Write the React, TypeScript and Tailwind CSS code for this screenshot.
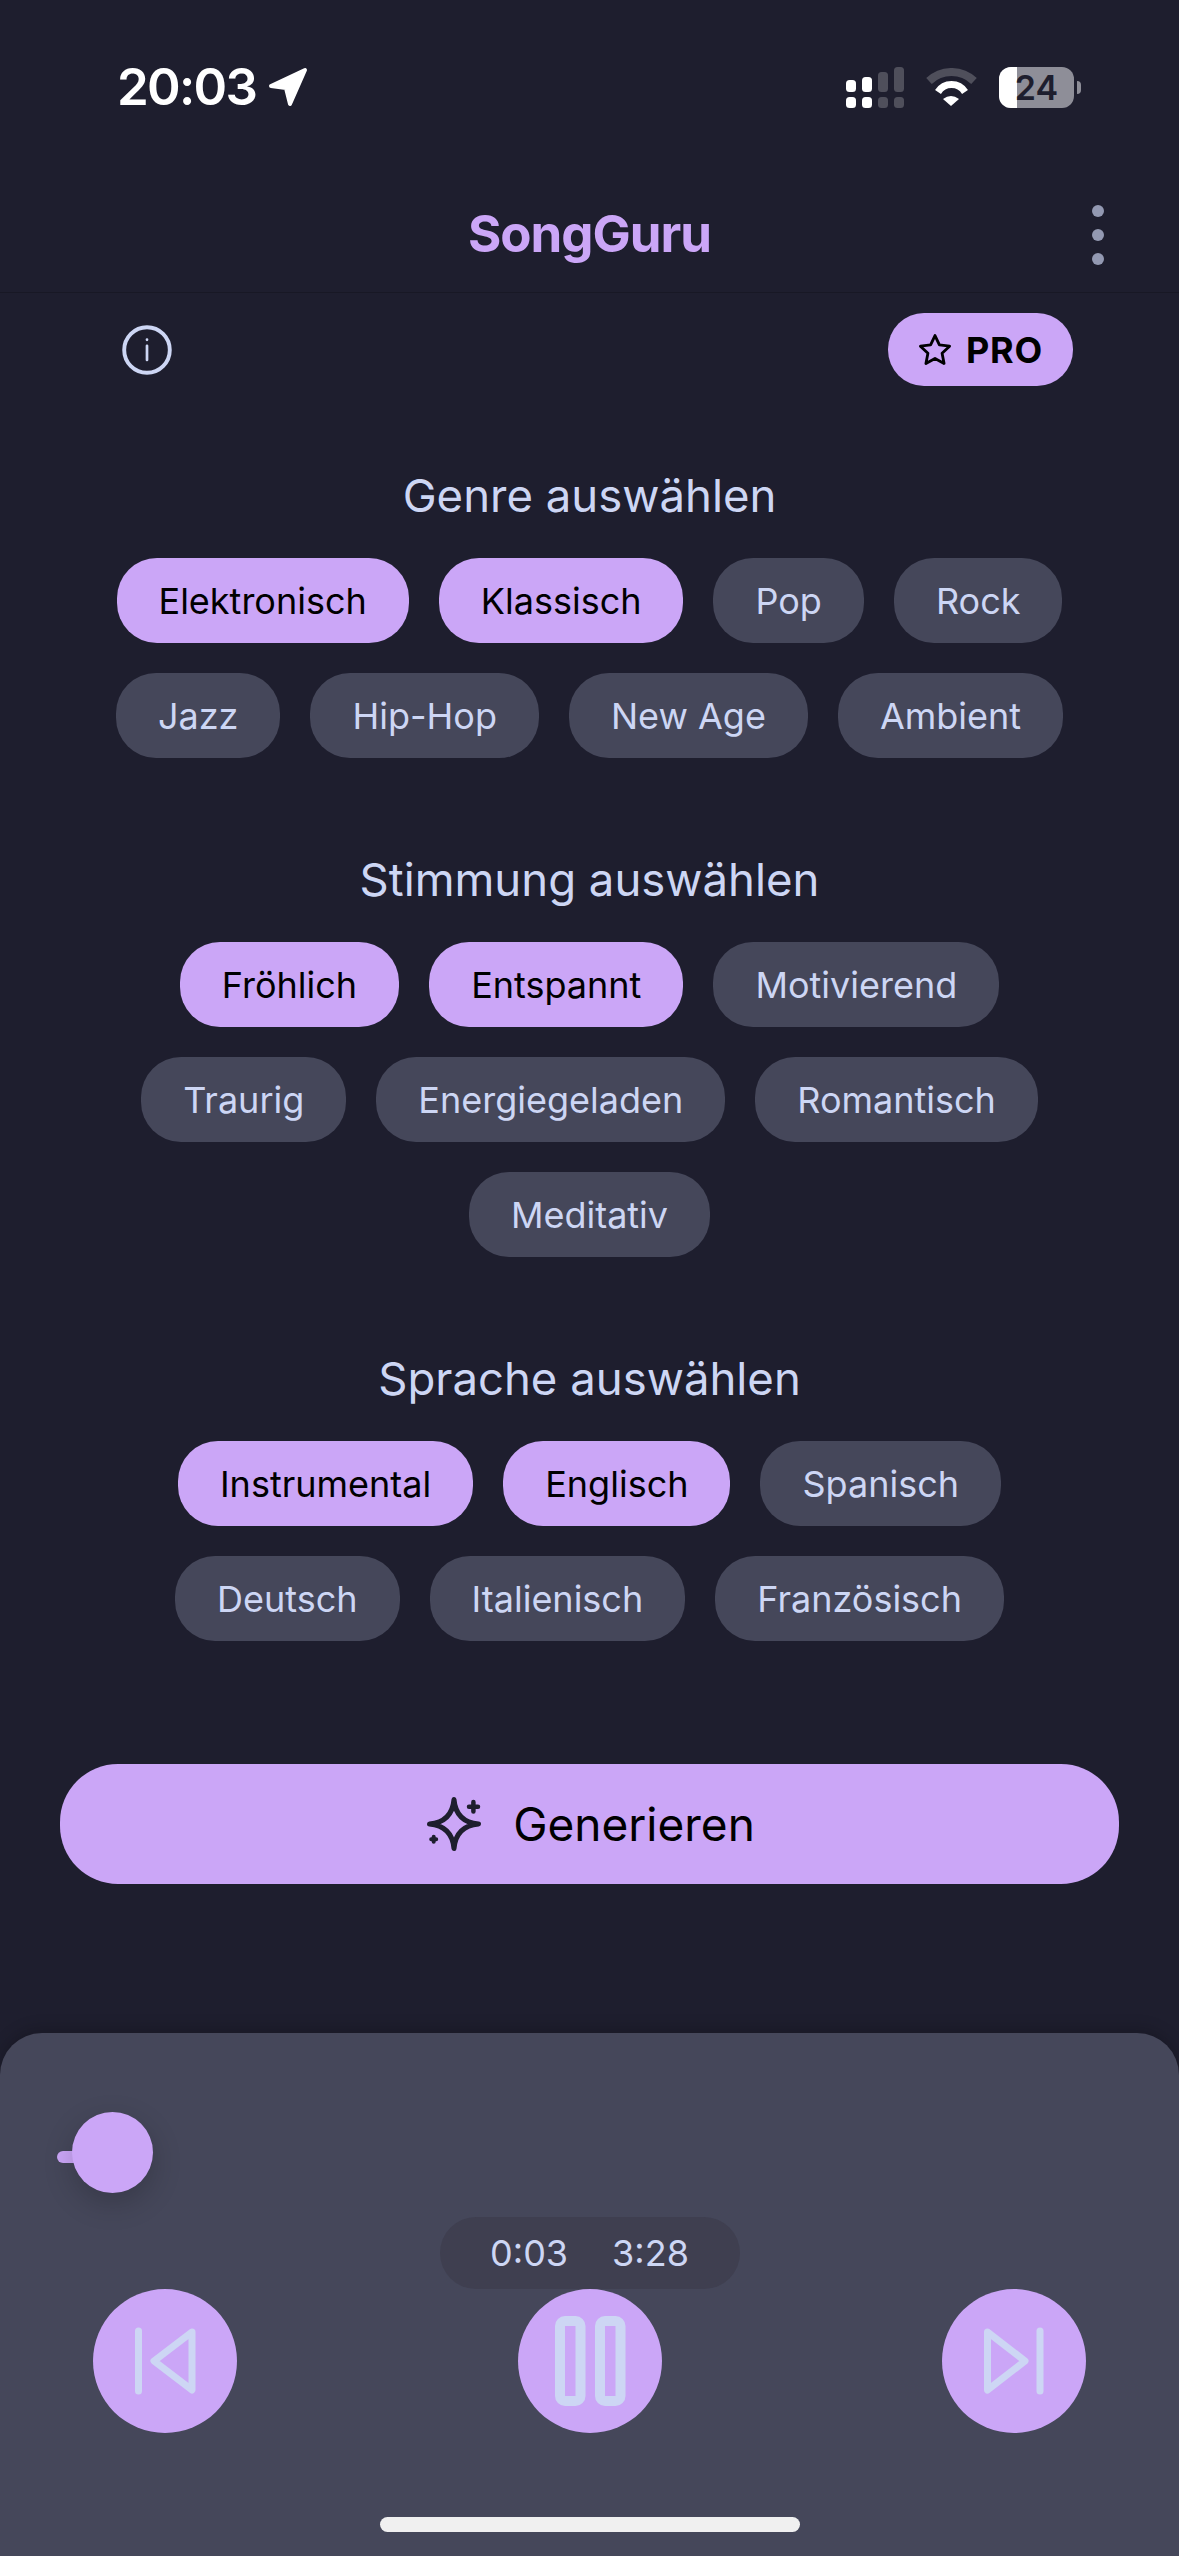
import React from "react";

const Chip = ({ label, on }: { label: string; on?: boolean }) => (
  <div className={on
    ? "h-[85px] px-[42px] rounded-[40px] flex items-center bg-[#cba6f7] text-black text-[36px]"
    : "h-[85px] px-[42px] rounded-[40px] flex items-center bg-[#45475a] text-[#cdd6f4] text-[36px]"}>
    {label}
  </div>
);

const Section = ({ title, rows, className }: { title: string; rows: [string, boolean?][]; className: string }) => (
  <section className={className}>
    <h2 className="text-center text-[45.5px] leading-[60px] text-[#cdd6f4] font-normal">{title}</h2>
    <div className="mt-[32px] px-[105px] flex flex-wrap justify-center gap-x-[30px] gap-y-[30px]">
      {rows.map(([l, on]) => <Chip key={l} label={l} on={on} />)}
    </div>
  </section>
);

const StatusIcons = () => (
  <div className="flex items-start">
    <svg width="58" height="41" viewBox="0 0 58 41" fill="white">
      <rect x="0" y="13" width="10" height="12" rx="3.5" />
      <rect x="0" y="30" width="10" height="11" rx="3.5" />
      <rect x="16" y="10" width="10" height="15" rx="3.500" />
      <rect x="16" y="30" width="10" height="11" rx="3.5" />
      <rect x="32" y="5" width="10" height="20" rx="3.500" opacity="0.22" />
      <rect x="32" y="30" width="10" height="11" rx="3.5" opacity="0.22" />
      <rect x="48" y="0" width="10" height="25" rx="3.500" opacity="0.22" />
      <rect x="48" y="30" width="10" height="11" rx="3.5" opacity="0.22" />
    </svg>
    <svg className="ml-[22px] mt-[1px]" width="51" height="38" viewBox="0 0 51 38">
      <path d="M3 13 A32.600 32.600 0 0 1 48 13" fill="none" stroke="white" strokeOpacity="0.22" strokeWidth="8" />
      <path d="M12 24 A16 16 0 0 1 39 24" fill="none" stroke="white" strokeWidth="7" />
      <path d="M17 31 Q25 25 33 31 L25 38 Z" fill="white" />
    </svg>
    <div className="ml-[22px] relative w-[75px] h-[41px] rounded-[12px] bg-[#8e8e98] overflow-hidden flex items-center justify-center">
      <div className="absolute left-0 top-0 bottom-0 w-[18px] bg-white" />
      <span className="relative text-[#1e1e2e] text-[34px] font-semibold leading-none">24</span>
    </div>
    <div className="ml-[3px] mt-[14px] w-[4px] h-[13px] rounded-r-full bg-[#8e8e98]" />
  </div>
);

const Sparkle = () => (
  <svg width="54" height="54" viewBox="0 0 54 54" fill="none" stroke="#1e1e2e" strokeLinecap="round" strokeLinejoin="round">
    <path strokeWidth="5" d="M27 2.500 Q29 25 51.500 27 Q29 29 27 51.500 Q25 29 2.500 27 Q25 25 27 2.500 Z" />
    <path strokeWidth="4.500" d="M46.400 5 V14.500 M42 9.700 H51" />
    <path strokeWidth="4" d="M6.700 39.800 V44.800 M4.200 42.300 H9.200" />
  </svg>
);

export default function App() {
  return (
    <div className="w-[1179px] h-[2556px] bg-[#1e1e2e] flex flex-col font-['Inter',sans-serif] overflow-hidden">
      <div className="h-[172px] pl-[117px] pr-[98px] pt-[60px] flex justify-between items-start">
        <div className="flex items-center text-white text-[51px] leading-[54px] font-semibold tracking-[-1.7px]">
          20:03
          <svg className="ml-[12px]" width="42" height="42" viewBox="0 0 42 42" fill="white" stroke="white" strokeWidth="4" strokeLinejoin="round">
            <path d="M3 20 L37 4 L22 38 L18 22 Z" />
          </svg>
        </div>
        <div className="mt-[7px]"><StatusIcons /></div>
      </div>
      <header className="h-[121px] relative flex items-center justify-center border-b border-[#181825]">
        <h1 className="text-[#cba6f7] text-[51px] font-bold tracking-[-1px] mt-[5px]">SongGuru</h1>
        <div className="absolute right-[75px] top-[33px] flex flex-col gap-[12px]">
          <span className="w-[12px] h-[12px] rounded-full bg-[#9399b2]" />
          <span className="w-[12px] h-[12px] rounded-full bg-[#9399b2]" />
          <span className="w-[12px] h-[12px] rounded-full bg-[#9399b2]" />
        </div>
      </header>
      <div className="mt-[20px] pl-[111px] pr-[106px] flex items-center justify-between">
        <svg width="72" height="72" viewBox="0 0 24 24" fill="none" stroke="#cdd6f4" strokeLinecap="round" className="w-[72px] h-[72px]">
          <circle cx="12" cy="12" r="7.600" strokeWidth="1.300" />
          <path d="M12 10.600 V15.300 M12 8.500 V8.600" strokeWidth="0.900" />
        </svg>
        <div className="h-[73px] w-[185px] rounded-[36px] bg-[#cba6f7] flex items-center justify-center gap-[14px] text-black text-[36px] font-bold tracking-[0.7px]">
          <svg width="34" height="34" viewBox="0 0 24 24" fill="none" stroke="black" strokeWidth="2" strokeLinejoin="round">
            <path d="M12 1.800 L15.100 8.400 L22.300 9.300 L17 14.300 L18.400 21.500 L12 18 L5.600 21.500 L7 14.300 L1.700 9.300 L8.900 8.400 Z" />
          </svg>
          PRO
        </div>
      </div>
      <Section className="mt-[80px]" title="Genre auswählen" rows={[["Elektronisch", true], ["Klassisch", true], ["Pop"], ["Rock"], ["Jazz"], ["Hip-Hop"], ["New Age"], ["Ambient"]]} />
      <Section className="mt-[92px]" title="Stimmung auswählen" rows={[["Fröhlich", true], ["Entspannt", true], ["Motivierend"], ["Traurig"], ["Energiegeladen"], ["Romantisch"], ["Meditativ"]]} />
      <Section className="mt-[92px]" title="Sprache auswählen" rows={[["Instrumental", true], ["Englisch", true], ["Spanisch"], ["Deutsch"], ["Italienisch"], ["Französisch"]]} />
      <div className="mt-[123px] mx-[60px] pl-[3px] h-[120px] rounded-[58px] bg-[#cba6f7] flex items-center justify-center gap-[32px] text-black text-[46px]">
        <Sparkle />
        Generieren
      </div>
      <div className="mt-auto h-[523px] rounded-t-[42px] bg-[#45475a] shadow-[0_-4px_16px_rgba(0,0,0,0.2)] relative flex flex-col">
        <div className="pt-[79px] pl-[57px] flex items-center">
          <div className="w-[30px] h-[12px] rounded-l-full bg-[#cba6f7] mt-[8px]" />
          <div className="-ml-[15px] w-[81px] h-[81px] rounded-full bg-[#cba6f7] shadow-[0_10px_30px_rgba(0,0,0,0.2)]" />
        </div>
        <div className="mt-[24px] mx-auto w-[300px] h-[72px] rounded-[36px] bg-[#3f3f50] flex items-center justify-center gap-[44px] text-[36px] text-[#cdd6f4]">
          <span>0:03</span>
          <span>3:28</span>
        </div>
        <div className="px-[93px] flex justify-between">
          <button className="w-[144px] h-[144px] rounded-full bg-[#cba6f7]">
            <svg width="144" height="144" viewBox="0 0 144 144" fill="none" stroke="#cdd6f4" strokeWidth="7" strokeLinecap="round" strokeLinejoin="round">
              <path d="M45.500 42 V102" />
              <path d="M99 43 L61 72 L99 101 Z" />
            </svg>
          </button>
          <button className="w-[144px] h-[144px] rounded-full bg-[#cba6f7]">
            <svg width="144" height="144" viewBox="0 0 144 144" fill="none" stroke="#cdd6f4" strokeWidth="10" strokeLinejoin="round">
              <rect x="42" y="32" width="20.500" height="80" rx="5" />
              <rect x="82" y="32" width="20.500" height="80" rx="5" />
            </svg>
          </button>
          <button className="w-[144px] h-[144px] rounded-full bg-[#cba6f7]">
            <svg width="144" height="144" viewBox="0 0 144 144" fill="none" stroke="#cdd6f4" strokeWidth="7" strokeLinecap="round" strokeLinejoin="round">
              <path d="M98 42 V102" />
              <path d="M45.500 43 L83 72 L45.500 101 Z" />
            </svg>
          </button>
        </div>
        <div className="mt-[84px] mx-auto w-[420px] h-[15px] rounded-full bg-[#f0f0f0]" />
      </div>
    </div>
  );
}
